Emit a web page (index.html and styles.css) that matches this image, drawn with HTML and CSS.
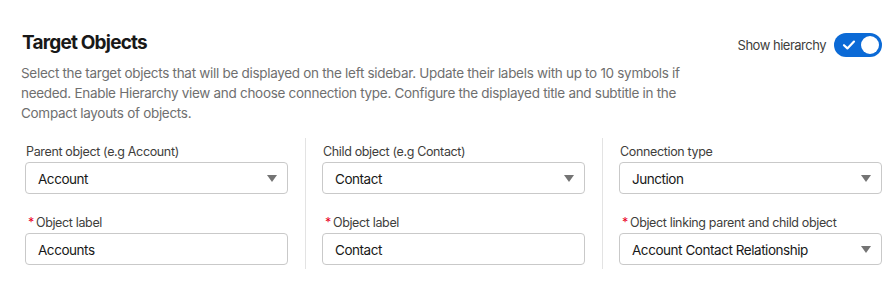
FILE: index.html
```html
<!DOCTYPE html>
<html>
<head>
<meta charset="utf-8">
<link rel="stylesheet" href="styles.css">
</head>
<body>
<div class="panel">
  <div class="header">
    <div class="intro">
      <h2 class="title">Target Objects</h2>
      <p class="desc">Select the target objects that will be displayed on the left sidebar. Update their labels with up to 10 symbols if needed. Enable Hierarchy view and choose connection type. Configure the displayed title and subtitle in the Compact layouts of objects.</p>
    </div>
    <div class="toggle-wrap">
      <span class="toggle-label">Show hierarchy</span>
      <span class="toggle">
        <svg class="check" width="14" height="12" viewBox="0 0 14 12"><path d="M2 6.2 L5.4 9.4 L12 2.6" fill="none" stroke="#fff" stroke-width="2.2" stroke-linecap="round" stroke-linejoin="round"/></svg>
        <span class="knob"></span>
      </span>
    </div>
  </div>
  <div class="columns">
    <div class="col">
      <div class="field">
        <div class="label">Parent object (e.g Account)</div>
        <div class="box select"><span>Account</span><span class="caret"></span></div>
      </div>
      <div class="field">
        <div class="label"><span class="req">*</span>Object label</div>
        <div class="box"><span>Accounts</span></div>
      </div>
    </div>
    <div class="col">
      <div class="field">
        <div class="label">Child object (e.g Contact)</div>
        <div class="box select"><span>Contact</span><span class="caret"></span></div>
      </div>
      <div class="field">
        <div class="label"><span class="req">*</span>Object label</div>
        <div class="box"><span>Contact</span></div>
      </div>
    </div>
    <div class="col">
      <div class="field">
        <div class="label">Connection type</div>
        <div class="box select"><span>Junction</span><span class="caret"></span></div>
      </div>
      <div class="field">
        <div class="label"><span class="req">*</span>Object linking parent and child object</div>
        <div class="box select"><span>Account Contact Relationship</span><span class="caret"></span></div>
      </div>
    </div>
  </div>
</div>
</body>
</html>
```

FILE: styles.css
```css
* { box-sizing: border-box; }
body {
  margin: 0;
  background: #ffffff;
  font-family: Inter, "Noto Sans", "Liberation Sans", sans-serif;
  color: #181818;
}
.panel {
  width: 891px;
  height: 282px;
  padding: 31px 9px 0 21px;
}
.header {
  display: flex;
  justify-content: space-between;
  align-items: flex-start;
}
.intro { width: 690px; }
.title {
  margin: 0 0 0 1px;
  font-size: 19px;
  line-height: 24px;
  font-weight: 700;
  color: #181818;
  letter-spacing: -0.8px;
}
.desc {
  margin: 8px 0 0 0;
  font-size: 13.5px;
  line-height: 20px;
  color: #6f6f6f;
  letter-spacing: -0.3px;
}
.toggle-wrap {
  display: flex;
  align-items: center;
  gap: 8px;
  margin-top: 2px;
}
.toggle-label {
  font-size: 13px;
  color: #3e3e3c;
  letter-spacing: -0.5px;
}
.toggle {
  position: relative;
  display: flex;
  align-items: center;
  width: 48px;
  height: 24px;
  border-radius: 12px;
  background: #0b6ad6;
  padding-left: 8px;
}
.knob {
  position: absolute;
  right: 3px;
  top: 3px;
  width: 18px;
  height: 18px;
  border-radius: 50%;
  background: #ffffff;
}
.columns {
  display: flex;
  margin-top: 15px;
  margin-left: 4px;
}
.col {
  flex: 1 1 0;
  box-sizing: content-box;
  padding: 5px 17px 4px 16px;
  border-right: 1px solid #e3e3e3;
}
.col:first-child { padding-left: 0; }
.col:last-child { padding-right: 0; border-right: none; }
.field + .field { margin-top: 20px; }
.label {
  font-size: 12.5px;
  line-height: 18px;
  color: #3e3e3c;
  margin-bottom: 1px;
  padding-left: 1px;
  letter-spacing: -0.35px;
}
.req {
  color: #ea001e;
  margin-right: 2px;
  margin-left: 2px;
}
.box {
  display: flex;
  align-items: center;
  justify-content: space-between;
  height: 32px;
  border: 1px solid #c9c9c9;
  border-radius: 4px;
  padding: 1px 10px 0 12px;
  font-size: 13.5px;
  color: #181818;
  letter-spacing: -0.45px;
}
.caret {
  width: 0;
  height: 0;
  border-left: 5.5px solid transparent;
  border-right: 5.5px solid transparent;
  border-top: 7px solid #747474;
}
```
